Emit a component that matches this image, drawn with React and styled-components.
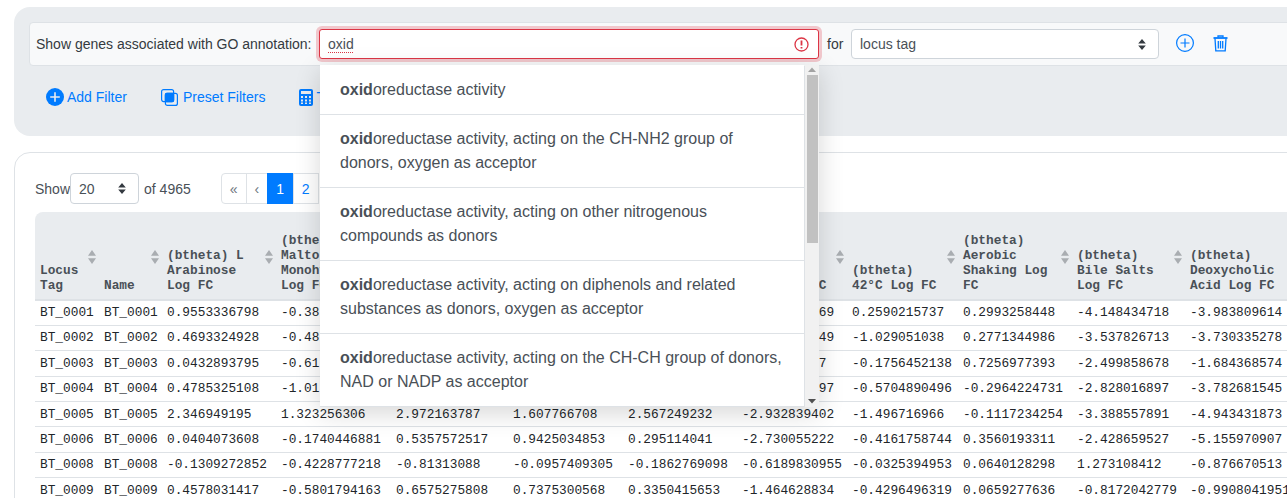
import React from "react";
import styled, { createGlobalStyle } from "styled-components";

const Global = createGlobalStyle`
  html, body { margin: 0; padding: 0; height: 498px; overflow: hidden; background: #fff; }
  body { font-family: "Liberation Sans", Arial, sans-serif; font-size: 14px; color: #212529; }
  * { box-sizing: border-box; }
`;

const Page = styled.div`
  width: 1500px;
  padding: 7px 0 0 14px;
`;
const Jumbotron = styled.section`
  background: #e9ecef;
  border-radius: 16px;
  padding: 15px 15px 0;
  height: 129px;
`;
const FilterRow = styled.div`
  display: flex;
  align-items: center;
  height: 44px;
  padding: 0 6px;
  background: #f8f9fa;
  border: 1px solid #dee2e6;
  border-radius: 4px;
`;
const FilterLabel = styled.span`
  color: #343a40;
  font-size: 14px;
  white-space: nowrap;
  width: 283px;
  flex: none;
`;
const SearchBox = styled.div`
  position: relative;
  width: 500px;
  height: 30px;
  flex: none;
`;
const SearchField = styled.div`
  display: flex;
  align-items: center;
  width: 100%;
  height: 100%;
  padding: 0 30px 0 8px;
  font-size: 14px;
  color: #495057;
  background: #fff;
  border: 1px solid #dc3545;
  border-radius: 3px;
  box-shadow: 0 0 0 3px rgba(220, 53, 69, 0.25);
`;
const MisspeltText = styled.span`
  text-decoration: underline dotted #dc3545 1px;
  text-underline-offset: 3px;
`;
const InvalidIcon = styled.svg`
  position: absolute;
  right: 10px;
  top: 8px;
  width: 15px;
  height: 15px;
`;
const Dropdown = styled.div`
  position: absolute;
  z-index: 10;
  left: 1px;
  top: 36px;
  width: 499px;
  height: 342px;
  display: flex;
  background: #fff;
  box-shadow: 0 6px 24px rgba(0, 0, 0, 0.16);
`;
const OptionList = styled.ul`
  list-style: none;
  margin: 0;
  padding: 0;
  width: 485px;
  flex: none;
  border-top: 1px solid #fff;
  border-right: 1px solid #dee2e6;
  border-bottom: 1px solid #dee2e6;
`;
const Option = styled.li`
  padding: 12px 20px;
  font-size: 16px;
  line-height: 24px;
  color: #495057;
  border-bottom: 1px solid #dee2e6;
  &:last-child { border-bottom: 0; }
`;
const Match = styled.b`
  font-weight: 700;
`;
const ScrollTrack = styled.div`
  flex: 1;
  display: flex;
  flex-direction: column;
  align-items: center;
  background: #f1f1f1;
  padding: 1px 0 2px;
`;
const ScrollArrow = styled.svg`
  width: 10px;
  height: 8px;
  flex: none;
  fill: ${(p) => p.$tone};
`;
const ScrollThumb = styled.div`
  width: 11px;
  height: 168px;
  margin-top: 1px;
  background: #c1c1c1;
`;
const ScrollSpacer = styled.div`
  flex: 1;
`;
const ForLabel = styled.span`
  color: #343a40;
  margin-left: 8px;
  width: 24px;
  flex: none;
`;
const SelectWrap = styled.div`
  position: relative;
  flex: none;
  width: ${(p) => p.$w}px;
  height: ${(p) => p.$h}px;
`;
const NativeSelect = styled.select`
  width: 100%;
  height: 100%;
  padding: 0 0 0 8px;
  appearance: none;
  font: 14px "Liberation Sans", Arial, sans-serif;
  color: #495057;
  background: #fff;
  border: 1px solid #ced4da;
  border-radius: 4px;
  outline: none;
`;
const Caret = styled.svg`
  position: absolute;
  right: ${(p) => p.$r}px;
  top: 50%;
  width: 8px;
  height: 11px;
  margin-top: -5.5px;
  fill: #343a40;
  pointer-events: none;
`;
const IconButton = styled.button`
  display: flex;
  padding: 0;
  margin: -2px 0 0 ${(p) => p.$ml}px;
  background: none;
  border: 0;
  color: #007bff;
`;
const ActionBar = styled.div`
  display: flex;
  align-items: center;
  gap: 34px;
  padding: 21px 0 0 17px;
`;
const ActionLink = styled.a`
  display: flex;
  align-items: center;
  gap: ${(p) => p.$gap}px;
  color: #007bff;
  font-size: 14px;
  line-height: 20px;
  white-space: nowrap;
`;
const Card = styled.section`
  margin-top: 16px;
  padding: 20px;
  height: 500px;
  background: #fff;
  border: 1px solid #dee2e6;
  border-radius: 16px;
`;
const Controls = styled.div`
  display: flex;
  align-items: center;
  height: 31px;
  margin-bottom: 8px;
  color: #495057;
`;
const OfLabel = styled.span`
  margin-left: 5px;
`;
const Pagination = styled.nav`
  display: flex;
  margin-left: 31px;
  height: 31px;
`;
const PageItem = styled.span`
  display: flex;
  align-items: center;
  justify-content: center;
  width: ${(p) => p.$w}px;
  margin-left: -1px;
  font-size: 14px;
  color: ${(p) => (p.$active ? "#fff" : p.$muted ? "#6c757d" : "#007bff")};
  background: ${(p) => (p.$active ? "#007bff" : "#fff")};
  border: 1px solid ${(p) => (p.$active ? "#007bff" : "#dee2e6")};
  &:first-child { border-radius: 4px 0 0 4px; }
`;
const Table = styled.table`
  table-layout: fixed;
  border-collapse: collapse;
  width: 1264px;
  font-family: "Liberation Mono", "Courier New", monospace;
  font-size: 12.8px;
  line-height: 15.36px;
`;
const HeadCell = styled.th`
  position: relative;
  padding: 21px 20px 6px 5px;
  line-height: 15px;
  text-align: left;
  vertical-align: bottom;
  font-weight: 700;
  color: #495057;
  background: #e9ecef;
  border-bottom: 2px solid #dee2e6;
  &:first-child { border-top-left-radius: 8px; }
`;
const SortIcon = styled.svg`
  position: absolute;
  right: 3px;
  top: 50%;
  width: 8px;
  height: 14px;
  margin-top: -6px;
  fill: #a9adb1;
`;
const Row = styled.tr`
  height: 25.4px;
`;
const Cell = styled.td`
  padding: 0 5px;
  height: 25.4px;
  white-space: nowrap;
  color: #212529;
  border-bottom: 1px solid #dee2e6;
`;

const widths = [64, 63, 114, 115, 117, 115, 114, 110, 111, 114, 113, 114];
const headers = [
  "Locus Tag", "Name", "(btheta) L Arabinose Log FC", "(btheta) Maltose Monohydrate Log FC", "", "", "",
  "(btheta) 37°C Log FC", "(btheta) 42°C Log FC", "(btheta) Aerobic Shaking Log FC",
  "(btheta) Bile Salts Log FC", "(btheta) Deoxycholic Acid Log FC",
];
const rows = [
  ["BT_0001", "BT_0001", "0.9553336798", "-0.38", "", "", "", "-1.000000069", "0.2590215737", "0.2993258448", "-4.148434718", "-3.983809614"],
  ["BT_0002", "BT_0002", "0.4693324928", "-0.48", "", "", "", "-1.000000049", "-1.029051038", "0.2771344986", "-3.537826713", "-3.730335278"],
  ["BT_0003", "BT_0003", "0.0432893795", "-0.61", "", "", "", "-1.00000007", "-0.1756452138", "0.7256977393", "-2.499858678", "-1.684368574"],
  ["BT_0004", "BT_0004", "0.4785325108", "-1.01", "", "", "", "-1.000000097", "-0.5704890496", "-0.2964224731", "-2.828016897", "-3.782681545"],
  ["BT_0005", "BT_0005", "2.346949195", "1.323256306", "2.972163787", "1.607766708", "2.567249232", "-2.932839402", "-1.496716966", "-0.1117234254", "-3.388557891", "-4.943431873"],
  ["BT_0006", "BT_0006", "0.0404073608", "-0.1740446881", "0.5357572517", "0.9425034853", "0.295114041", "-2.730055222", "-0.4161758744", "0.3560193311", "-2.428659527", "-5.155970907"],
  ["BT_0008", "BT_0008", "-0.1309272852", "-0.4228777218", "-0.81313088", "-0.0957409305", "-0.1862769098", "-0.6189830955", "-0.0325394953", "0.0640128298", "1.273108412", "-0.876670513"],
  ["BT_0009", "BT_0009", "0.4578031417", "-0.5801794163", "0.6575275808", "0.7375300568", "0.3350415653", "-1.464628834", "-0.4296496319", "0.0659277636", "-0.8172042779", "-0.9908041951"],
];
const options = [
  "oreductase activity",
  "oreductase activity, acting on the CH-NH2 group of donors, oxygen as acceptor",
  "oreductase activity, acting on other nitrogenous compounds as donors",
  "oreductase activity, acting on diphenols and related substances as donors, oxygen as acceptor",
  "oreductase activity, acting on the CH-CH group of donors, NAD or NADP as acceptor",
];

const CaretGlyph = ({ r }) => (
  <Caret $r={r} viewBox="0 0 8 11"><path d="M4 0l3.8 4.4H.2zM4 11L.2 6.6h7.6z" /></Caret>
);

export default function App() {
  return (
    <Page>
      <Global />
      <Jumbotron>
        <FilterRow>
          <FilterLabel>Show genes associated with GO annotation:</FilterLabel>
          <SearchBox>
            <SearchField><MisspeltText>oxid</MisspeltText></SearchField>
            <InvalidIcon viewBox="0 0 15 15" fill="none" stroke="#dc3545">
              <circle cx="7.5" cy="7.5" r="6.5" strokeWidth="1.3" />
              <path d="M7.5 3.6v4.8M7.5 10v1.5" strokeWidth="1.8" />
            </InvalidIcon>
            <Dropdown>
              <OptionList>
                {options.map((o) => (
                  <Option key={o}><Match>oxid</Match>{o}</Option>
                ))}
              </OptionList>
              <ScrollTrack>
                <ScrollArrow $tone="#a3a3a3" viewBox="0 0 10 8"><path d="M5 1.5L9 6H1z" /></ScrollArrow>
                <ScrollThumb />
                <ScrollSpacer />
                <ScrollArrow $tone="#505050" viewBox="0 0 10 8"><path d="M1 2h8L5 6.5z" /></ScrollArrow>
              </ScrollTrack>
            </Dropdown>
          </SearchBox>
          <ForLabel>for</ForLabel>
          <SelectWrap $w={308} $h={30}>
            <NativeSelect defaultValue="locus tag"><option>locus tag</option></NativeSelect>
            <CaretGlyph r={13} />
          </SelectWrap>
          <IconButton $ml={17} aria-label="Add">
            <svg width="18" height="18" viewBox="0 0 18 18" fill="none" stroke="currentColor" strokeWidth="1.2">
              <circle cx="9" cy="9" r="8.4" />
              <path d="M9 4.5v9M4.5 9h9" />
            </svg>
          </IconButton>
          <IconButton $ml={19} aria-label="Delete">
            <svg width="15" height="17" viewBox="0 0 15 17" fill="none" stroke="currentColor" strokeWidth="1.3">
              <path d="M.5 3h14" strokeWidth="1.8" />
              <path d="M5 2.5V1h5v1.5" />
              <path d="M2 3.5l.8 12.3h9.4L13 3.5" />
              <path d="M5.3 6v7.5M7.5 6v7.5M9.7 6v7.5" />
            </svg>
          </IconButton>
        </FilterRow>
        <ActionBar>
          <ActionLink $gap={3}>
            <svg width="18" height="18" viewBox="0 0 18 18">
              <circle cx="9" cy="9" r="9" fill="currentColor" />
              <path d="M9 4.2v9.6M4.2 9h9.6" stroke="#e9ecef" strokeWidth="1.6" />
            </svg>
            Add Filter
          </ActionLink>
          <ActionLink $gap={5}>
            <svg width="17" height="17" viewBox="0 0 17 17" fill="none" stroke="currentColor" strokeWidth="1.2">
              <rect x="0.6" y="0.6" width="12" height="12" rx="2" />
              <rect x="4.4" y="4.4" width="12" height="12" rx="2" />
              <rect x="4.4" y="4.4" width="8.2" height="8.2" rx="1" fill="currentColor" />
            </svg>
            Preset Filters
          </ActionLink>
          <ActionLink $gap={3}>
            <svg width="14" height="17" viewBox="0 0 14 17">
              <rect width="14" height="17" rx="2" fill="currentColor" />
              <rect x="2" y="2" width="10" height="3" fill="#e9ecef" />
              <path d="M2 7h2v2H2zM6 7h2v2H6zM10 7h2v2h-2zM2 10.5h2v2H2zM6 10.5h2v2H6zM10 10.5h2v2h-2zM2 13.5h2v1.5H2zM6 13.5h2v1.5H6zM10 13.5h2v1.5h-2z" fill="#e9ecef" />
            </svg>
            T
          </ActionLink>
        </ActionBar>
      </Jumbotron>
      <Card>
        <Controls>
          Show
          <SelectWrap $w={69} $h={31}>
            <NativeSelect defaultValue="20"><option>20</option></NativeSelect>
            <CaretGlyph r={13} />
          </SelectWrap>
          <OfLabel>of 4965</OfLabel>
          <Pagination>
            <PageItem $w={26} $muted>«</PageItem>
            <PageItem $w={22} $muted>‹</PageItem>
            <PageItem $w={27} $active>1</PageItem>
            <PageItem $w={26}>2</PageItem>
          </Pagination>
        </Controls>
        <Table>
          <colgroup>
            {widths.map((w, i) => <col key={i} width={w} />)}
          </colgroup>
          <thead>
            <tr>
              {headers.map((h, i) => (
                <HeadCell key={i}>
                  {h}
                  <SortIcon viewBox="0 0 8 14"><path d="M4 0l4 5.8H0zM4 14L0 8.2h8z" /></SortIcon>
                </HeadCell>
              ))}
            </tr>
          </thead>
          <tbody>
            {rows.map((r) => (
              <Row key={r[0]}>
                {r.map((c, i) => <Cell key={i}>{c}</Cell>)}
              </Row>
            ))}
          </tbody>
        </Table>
      </Card>
    </Page>
  );
}
